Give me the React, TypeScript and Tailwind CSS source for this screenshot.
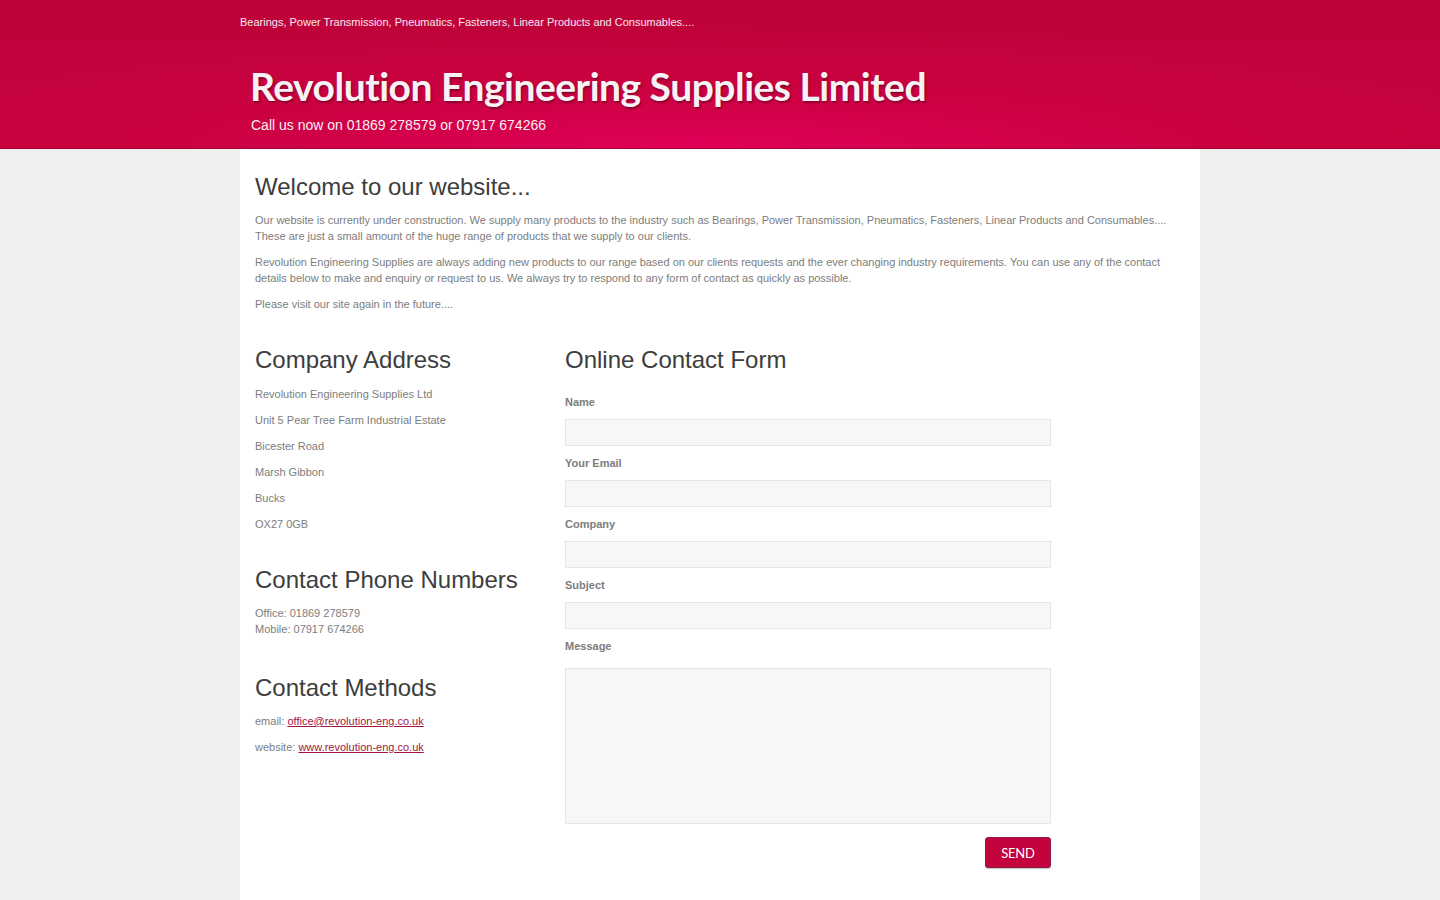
const address = [
  'Revolution Engineering Supplies Ltd',
  'Unit 5 Pear Tree Farm Industrial Estate',
  'Bicester Road',
  'Marsh Gibbon',
  'Bucks',
  'OX27 0GB',
]

const fields = ['Name', 'Your Email', 'Company', 'Subject']

function Heading({ children }: { children: React.ReactNode }) {
  return <h2 className="text-[24px] leading-[28px] text-[#3d3d3d] font-normal">{children}</h2>
}

export default function App() {
  return (
    <div className="min-h-screen bg-[#efefef] font-['Liberation_Sans',Arial,sans-serif] text-[11px] leading-[16px] text-[#7d7d7d]">
      <header className="relative h-[149px] border-b border-[#a3002f] bg-[radial-gradient(ellipse_70%_80%_at_48%_100%,#df0058_0%,#c9023f_55%,#c2033d_100%)]">
        <div className="h-[41px] bg-[#bf0339]/40 absolute inset-x-0 top-0 pointer-events-none" />
        <div className="relative w-[960px] mx-auto">
          <p className="pt-[16px] text-[11px] leading-[12px] text-[#f6e9ee]">
            Bearings, Power Transmission, Pneumatics, Fasteners, Linear Products and Consumables....
          </p>
          <h1 className="mt-[34px] pl-[10px] font-['Lato',sans-serif] font-bold text-[39px] leading-[48px] tracking-[-0.5px] text-[#f7f2f5] [text-shadow:1px_2px_2px_rgba(60,0,20,0.45)]">
            Revolution Engineering Supplies Limited
          </h1>
          <p className="mt-[7px] pl-[11px] text-[14px] leading-[16px] text-[#fbeef3]">
            Call us now on 01869 278579 or 07917 674266
          </p>
        </div>
      </header>

      <main className="w-[960px] mx-auto bg-white px-[15px] pt-[24px] pb-[40px] min-h-[751px]">
        <Heading>Welcome to our website...</Heading>
        <div className="mt-[11px] space-y-[10px]">
          <p>
            Our website is currently under construction. We supply many products to the industry such as Bearings, Power Transmission, Pneumatics, Fasteners, Linear Products and Consumables.... These are just a small amount of the huge range of products that we supply to our clients.
          </p>
          <p>
            Revolution Engineering Supplies are always adding new products to our range based on our clients requests and the ever changing industry requirements. You can use any of the contact details below to make and enquiry or request to us. We always try to respond to any form of contact as quickly as possible.
          </p>
          <p>Please visit our site again in the future....</p>
        </div>

        <div className="mt-[34px] flex">
          <div className="w-[310px]">
            <Heading>Company Address</Heading>
            <div className="mt-[12px] space-y-[10px]">
              {address.map((line) => (
                <p key={line}>{line}</p>
              ))}
            </div>

            <div className="mt-[34px]">
              <Heading>Contact Phone Numbers</Heading>
              <p className="mt-[11px]">
                Office: 01869 278579
                <br />
                Mobile: 07917 674266
              </p>
            </div>

            <div className="mt-[37px]">
              <Heading>Contact Methods</Heading>
              <div className="mt-[11px] space-y-[10px]">
                <p>
                  email: <a href="#" className="text-[#9e1546] underline">office@revolution-eng.co.uk</a>
                </p>
                <p>
                  website: <a href="#" className="text-[#9e1546] underline">www.revolution-eng.co.uk</a>
                </p>
              </div>
            </div>
          </div>

          <div className="w-[486px]">
            <Heading>Online Contact Form</Heading>
            <form className="mt-[20px]">
              {fields.map((f) => (
                <div key={f} className="mb-[9px]">
                  <label className="block font-bold text-[#7d7d7d]">{f}</label>
                  <input className="mt-[9px] block w-full h-[27px] bg-[#f7f7f7] border border-[#e6e6e6] outline-none" />
                </div>
              ))}
              <label className="block font-bold text-[#7d7d7d]">Message</label>
              <textarea className="mt-[14px] block w-full h-[156px] bg-[#f7f7f7] border border-[#e6e6e6] outline-none resize-none" />
              <div className="mt-[13px] flex justify-end">
                <button
                  type="button"
                  className="w-[66px] h-[31px] rounded-[3px] bg-[#c4033e] border border-[#8e1d43] text-white font-['Liberation_Sans_Narrow','Lato',sans-serif] text-[13px] tracking-[-0.2px] shadow-[0_1px_1px_rgba(0,0,0,0.25)]"
                >
                  SEND
                </button>
              </div>
            </form>
          </div>
        </div>
      </main>
    </div>
  )
}
